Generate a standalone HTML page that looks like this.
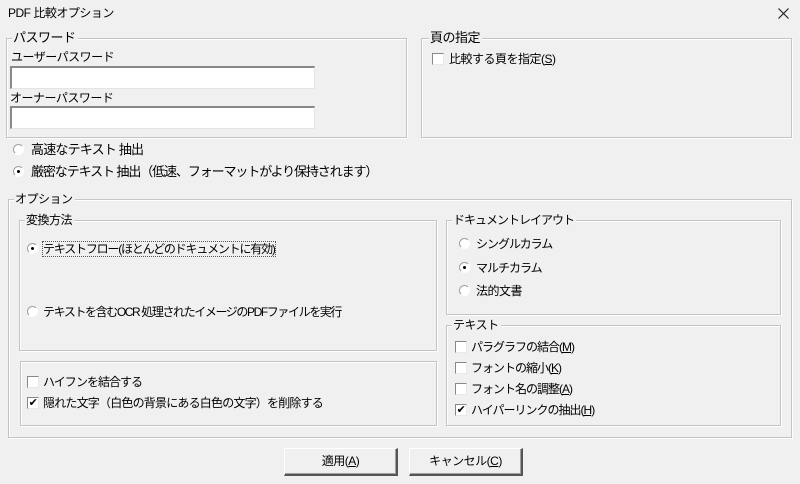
<!DOCTYPE html>
<html><head><meta charset="utf-8"><style>
*{margin:0;padding:0;box-sizing:border-box}
body{width:800px;height:484px;background:#f0f0f0;font-family:"Liberation Sans","Noto Sans CJK JP",sans-serif;font-size:12px;color:#000;position:relative;overflow:hidden;letter-spacing:-0.5px}
.a{position:absolute;white-space:nowrap;line-height:14px}
.g{position:absolute;border:1px solid #c4c4c4;box-shadow:1px 1px 0 #fff inset,1px 1px 0 #fff}
.lg{position:absolute;background:#f0f0f0;padding:0 2px 0 1px;line-height:14px;white-space:nowrap}
.in{position:absolute;background:#fff;border-top:2px solid #888;border-left:2px solid #888;border-right:1px solid #e4e4e4;border-bottom:1px solid #e4e4e4}
.r{position:absolute;width:11px;height:11px;border-radius:50%;background:#fff;border:1px solid #a0a0a0;border-right-color:#fff;border-bottom-color:#fff}
.r.on::after{content:"";position:absolute;left:3px;top:3px;width:3px;height:3px;background:#000;border-radius:50%}
.c{position:absolute;width:12px;height:12px;background:#fff;border:1px solid #888;border-right-color:#e8e8e8;border-bottom-color:#e8e8e8}
.b{position:absolute;height:28px;background:#f0f0f0;border:1px solid #fff;border-right:2px solid #555;border-bottom:2px solid #555;box-shadow:inset -1px -1px 0 #a0a0a0;text-align:center;line-height:25px;font-size:12px}
u{text-decoration:underline}
.big{font-size:13px}
</style></head><body>
<div class="a" style="left:8px;top:6px;font-size:12px">PDF 比較オプション</div>
<svg style="position:absolute;left:778px;top:8px" width="11" height="11"><path d="M0.5 0.5L10.5 10.5M10.5 0.5L0.5 10.5" stroke="#222" stroke-width="1.2"/></svg>

<div class="g" style="left:6px;top:38px;width:401px;height:100px"></div>
<div class="lg big" style="left:12px;top:31px">パスワード</div>
<div class="a" style="left:11px;top:50px">ユーザーパスワード</div>
<div class="in" style="left:10px;top:66px;width:305px;height:23px"></div>
<div class="a" style="left:10px;top:91px">オーナーパスワード</div>
<div class="in" style="left:10px;top:106px;width:305px;height:23px"></div>

<div class="g" style="left:421px;top:38px;width:371px;height:100px"></div>
<div class="lg big" style="left:429px;top:31px">頁の指定</div>
<div class="c" style="left:432px;top:53px"></div>
<div class="a" style="left:449px;top:52px">比較する頁を指定(<u>S</u>)</div>

<div class="r" style="left:13px;top:144px"></div>
<div class="a big" style="left:31px;top:143px;letter-spacing:-0.8px">高速なテキスト 抽出</div>
<div class="r on" style="left:13px;top:166px"></div>
<div class="a big" style="left:31px;top:165px;letter-spacing:-1.1px">厳密なテキスト 抽出（低速、フォーマットがより保持されます）</div>

<div class="g" style="left:8px;top:199px;width:784px;height:239px"></div>
<div class="lg" style="left:14px;top:192px">オプション</div>

<div class="g" style="left:19px;top:220px;width:418px;height:131px"></div>
<div class="lg" style="left:25px;top:213px">変換方法</div>
<div class="r on" style="left:27px;top:243px"></div>
<div class="a" style="left:43px;top:242px;outline:1px dotted #555;letter-spacing:-1.2px">テキストフロー(ほとんどのドキュメントに有効)</div>
<div class="r" style="left:27px;top:306px"></div>
<div class="a" style="left:43px;top:305px;letter-spacing:-1.4px">テキストを含むOCR 処理されたイメージのPDFファイルを実行</div>

<div class="g" style="left:20px;top:361px;width:417px;height:65px"></div>
<div class="c" style="left:27px;top:376px"></div>
<div class="a" style="left:43px;top:375px;letter-spacing:-1px">ハイフンを結合する</div>
<div class="c" style="left:27px;top:397px;font-size:11px;line-height:10px;text-align:center">✔</div>
<div class="a" style="left:43px;top:396px;letter-spacing:-0.8px">隠れた文字（白色の背景にある白色の文字）を削除する</div>

<div class="g" style="left:446px;top:220px;width:335px;height:95px"></div>
<div class="lg" style="left:452px;top:213px;letter-spacing:-1px">ドキュメントレイアウト</div>
<div class="r" style="left:459px;top:238px"></div>
<div class="a" style="left:476px;top:237px;letter-spacing:-1px">シングルカラム</div>
<div class="r on" style="left:459px;top:262px"></div>
<div class="a" style="left:476px;top:261px;letter-spacing:-1px">マルチカラム</div>
<div class="r" style="left:459px;top:285px"></div>
<div class="a" style="left:476px;top:284px">法的文書</div>

<div class="g" style="left:446px;top:325px;width:335px;height:101px"></div>
<div class="lg" style="left:452px;top:318px">テキスト</div>
<div class="c" style="left:455px;top:341px"></div>
<div class="a" style="left:471px;top:340px;letter-spacing:-1px">パラグラフの結合(<u>M</u>)</div>
<div class="c" style="left:455px;top:362px"></div>
<div class="a" style="left:471px;top:361px;letter-spacing:-1px">フォントの縮小(<u>K</u>)</div>
<div class="c" style="left:455px;top:383px"></div>
<div class="a" style="left:471px;top:382px;letter-spacing:-1px">フォント名の調整(<u>A</u>)</div>
<div class="c" style="left:455px;top:404px;font-size:11px;line-height:10px;text-align:center">✔</div>
<div class="a" style="left:471px;top:403px;letter-spacing:-1px">ハイパーリンクの抽出(<u>H</u>)</div>

<div class="b" style="left:284px;top:448px;width:114px">適用(<u>A</u>)</div>
<div class="b" style="left:409px;top:448px;width:114px">キャンセル(<u>C</u>)</div>
</body></html>
